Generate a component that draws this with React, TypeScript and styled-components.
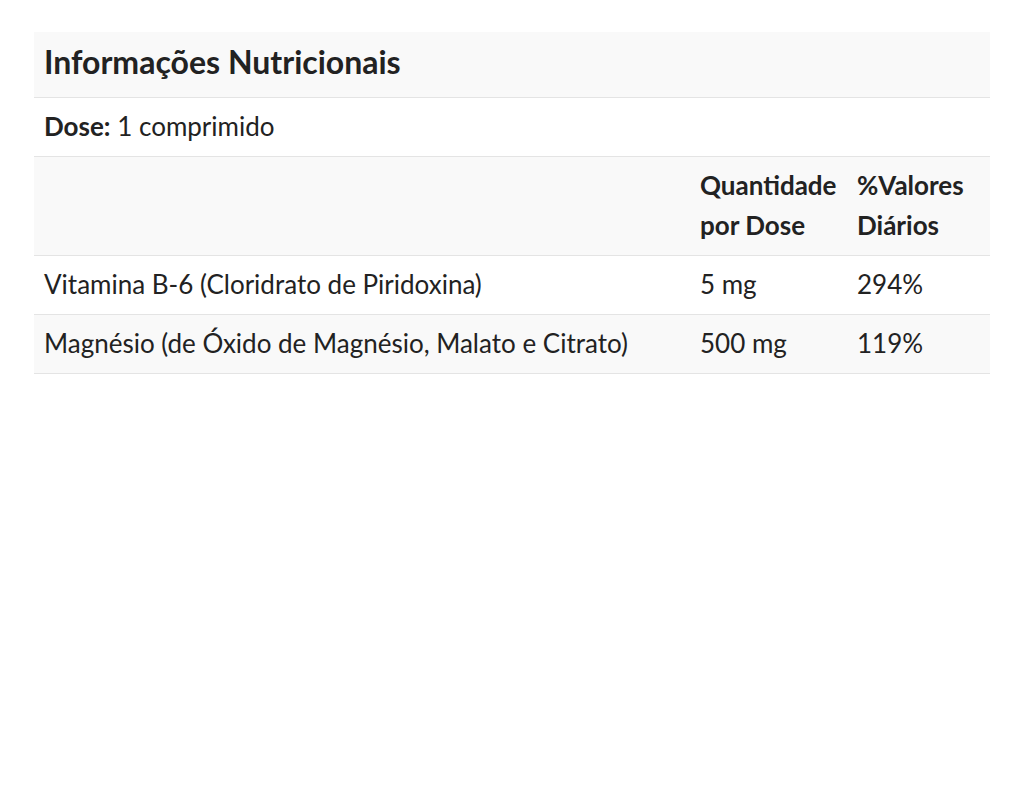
import React from 'react';
import styled, {createGlobalStyle} from "styled-components";

type RowType = {
    name: string
    amount: string
    daily: string
}

const rows: RowType[] = [
    {name: 'Vitamina B-6 (Cloridrato de Piridoxina)', amount: '5 mg', daily: '294%'},
    {name: 'Magnésio (de Óxido de Magnésio, Malato e Citrato)', amount: '500 mg', daily: '119%'},
]

const App = () => {
    return (
        <>
            <GlobalStyle/>
            <StyledPage>
                <StyledTable>
                    <StyledTitle>Informações Nutricionais</StyledTitle>
                    <StyledDose><b>Dose:</b> 1 comprimido</StyledDose>
                    <StyledRow striped>
                        <StyledCell/>
                        <StyledHeadCell>Quantidade por Dose</StyledHeadCell>
                        <StyledHeadCell>%Valores Diários</StyledHeadCell>
                    </StyledRow>
                    {rows.map((row, i) => (
                        <StyledRow key={row.name} striped={i % 2 === 1}>
                            <StyledCell>{row.name}</StyledCell>
                            <StyledCell>{row.amount}</StyledCell>
                            <StyledCell>{row.daily}</StyledCell>
                        </StyledRow>
                    ))}
                </StyledTable>
            </StyledPage>
        </>
    )
}

export default App

const GlobalStyle = createGlobalStyle`
    body {
        margin: 0;
        background: #ffffff;
        font-family: Lato, "Open Sans", sans-serif;
        color: #222222;
    }
`

const StyledPage = styled.div`
    padding: 32px 46px 0 34px;
`

const StyledTable = styled.div`
    display: flex;
    flex-direction: column;
`

const StyledTitle = styled.h2`
    margin: 0;
    padding: 10px 10px 15px 10px;
    font-size: 32px;
    font-weight: 700;
    line-height: 40px;
    background-color: #f9f9f9;
    border-bottom: 1px solid #e4e4e4;
`

const StyledDose = styled.div`
    padding: 8px 10px 10px;
    font-size: 26px;
    line-height: 40px;
    border-bottom: 1px solid #e4e4e4;

    b {
        font-weight: 700;
    }
`

const StyledRow = styled.div<{ striped?: boolean }>`
    display: grid;
    grid-template-columns: 656px 157px 143px;
    background-color: ${props => props.striped ? '#f9f9f9' : '#ffffff'};
    border-bottom: 1px solid #e4e4e4;
`

const StyledCell = styled.div`
    padding: 8px 10px 10px;
    font-size: 26px;
    line-height: 40px;
`

const StyledHeadCell = styled(StyledCell)`
    font-weight: 700;
`
